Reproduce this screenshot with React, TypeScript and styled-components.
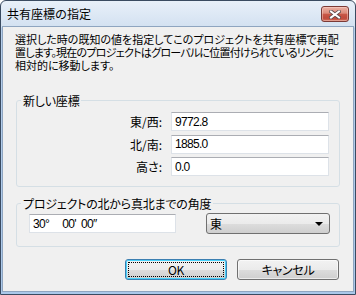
import React from 'react';
import styled, { createGlobalStyle } from 'styled-components';

const GlobalStyle = createGlobalStyle`
  html, body {
    margin: 0;
    padding: 0;
    background: #ffffff;
  }
  body {
    font-family: "Noto Sans CJK JP", "Liberation Sans", sans-serif;
    font-size: 12px;
    color: #000;
  }
`;

const JP = `"Noto Sans CJK JP", "Liberation Sans", sans-serif`;
const NUM = `"Liberation Sans", "Noto Sans CJK JP", sans-serif`;

const Window = styled.div`
  width: 356px;
  height: 295px;
  box-sizing: border-box;
  border: 1px solid #3a4b61;
  border-radius: 6px 6px 0 0;
  background: linear-gradient(#e8f0f9 0px, #d3e1f1 26px, #b6cfec 27px, #aac8ea 100%);
  display: flex;
  flex-direction: column;
  overflow: hidden;
`;

const TitleBar = styled.div`
  height: 25px;
  flex: none;
  display: flex;
  align-items: center;
  justify-content: space-between;
  padding: 0 6px 0 6px;
`;

const Title = styled.div`
  font-family: ${JP};
  font-size: 12px;
  line-height: 14px;
  margin-top: 1px;
  color: #000;
`;

const CloseButton = styled.div`
  width: 28px;
  height: 16px;
  box-sizing: border-box;
  margin-top: 1px;
  border: 1px solid #7b3a36;
  border-radius: 3px;
  background: linear-gradient(#eab0a3 0%, #dc8a7a 45%, #c85848 50%, #c04a3c 80%, #d0705c 100%);
  box-shadow: inset 0 0 0 1px rgba(255, 220, 210, 0.45);
  display: flex;
  align-items: center;
  justify-content: center;
`;

const Body = styled.div`
  flex: 1;
  margin: 0 1px 2px 1px;
  border: 1px solid #8fa5c0;
  background: #f0f0f0;
  padding: 6px 13px 0 13px;
  display: flex;
  flex-direction: column;
`;

const Description = styled.div`
  margin: 0 0 0 -1px;
  font-family: ${JP};
  font-feature-settings: "palt";
  font-size: 11px;
  line-height: 13px;
  white-space: nowrap;
`;

const Line = styled.div<{ $ls: number }>`
  height: 13px;
  letter-spacing: ${(p) => p.$ls}px;
`;

const Group = styled.fieldset<{ $top: number; $pad: string }>`
  margin: ${(p) => p.$top}px 0 0 0;
  padding: ${(p) => p.$pad};
  border: 1px solid #d5dfe5;
  border-radius: 3px;
  min-inline-size: 0;
`;

const Legend = styled.legend`
  margin-left: 4px;
  padding: 0 2px;
  font-family: ${JP};
  font-feature-settings: "palt";
  font-size: 12px;
  line-height: 13px;
  letter-spacing: -0.2px;
`;

const CoordGrid = styled.div`
  display: grid;
  grid-template-columns: 1fr 158px;
  column-gap: 9px;
  row-gap: 3.5px;
  align-items: center;
`;

const FieldLabel = styled.label`
  text-align: right;
  font-family: ${JP};
  font-feature-settings: "palt";
  font-size: 12px;
  line-height: 13px;
`;

const TextBox = styled.div<{ $width?: number }>`
  width: ${(p) => (p.$width ? `${p.$width}px` : 'auto')};
  height: 19px;
  box-sizing: border-box;
  background: #ffffff;
  border: 1px solid #dde2e8;
  border-top-color: #abadb3;
  padding: 0 0 0 3px;
  display: flex;
  align-items: center;
  font-family: ${NUM};
  font-size: 12px;
  letter-spacing: -0.7px;
  white-space: pre;
`;

const AngleRow = styled.div`
  display: flex;
  align-items: center;
  justify-content: space-between;
  padding: 3px 0 0 12px;
`;

const Select = styled.div`
  width: 124px;
  height: 21px;
  box-sizing: border-box;
  border: 1px solid #707070;
  border-radius: 3px;
  background: linear-gradient(#f2f2f2 0%, #ebebeb 50%, #dddddd 51%, #cfcfcf 100%);
  display: flex;
  align-items: center;
  justify-content: space-between;
  padding: 0 6px 0 3px;
  font-family: ${JP};
  font-size: 12px;
`;

const Arrow = styled.span`
  width: 0;
  height: 0;
  border-left: 4px solid transparent;
  border-right: 4px solid transparent;
  border-top: 4px solid #000;
`;

const ButtonRow = styled.div`
  display: flex;
  justify-content: flex-end;
  gap: 10px;
  margin: 12px 1px 0 0;
`;

const Button = styled.div<{ $default?: boolean }>`
  position: relative;
  width: 102px;
  height: 21px;
  box-sizing: border-box;
  border: 1px solid ${(p) => (p.$default ? '#3c7fb1' : '#707070')};
  border-radius: 3px;
  background: linear-gradient(#f2f2f2 0%, #ebebeb 50%, #dddddd 51%, #cfcfcf 100%);
  box-shadow: ${(p) => (p.$default ? 'inset 0 0 0 1px #48d2fb' : 'inset 0 0 0 1px rgba(255,255,255,0.6)')};
  display: flex;
  align-items: center;
  justify-content: center;
  font-family: ${JP};
  font-feature-settings: "palt";
  font-size: 12px;
  letter-spacing: -0.3px;
`;

const FocusRing = styled.span`
  position: absolute;
  inset: 2px;
  border: 1px dotted #000;
  pointer-events: none;
`;

const CloseIcon = () => (
  <svg width="12" height="9" viewBox="0 0 12 9">
    <path d="M2 1.5 L10 7.5 M10 1.5 L2 7.5" stroke="#5b4b4b" strokeWidth="3.6" strokeLinecap="square" />
    <path d="M2 1.5 L10 7.5 M10 1.5 L2 7.5" stroke="#ffffff" strokeWidth="2" strokeLinecap="square" />
  </svg>
);

const coords = [
  { label: '東/西:', value: '9772.8' },
  { label: '北/南:', value: '1885.0' },
  { label: '高さ:', value: '0.0' },
];

const descLines = [
  { text: '選択した時の既知の値を指定してこのプロジェクトを共有座標で再配', ls: 0 },
  { text: '置します。現在のプロジェクトはグローバルに位置付けられているリンクに', ls: -0.75 },
  { text: '相対的に移動します。', ls: 0 },
];

export default function App() {
  return (
    <>
      <GlobalStyle />
      <Window>
        <TitleBar>
          <Title>共有座標の指定</Title>
          <CloseButton>
            <CloseIcon />
          </CloseButton>
        </TitleBar>
        <Body>
          <Description>
            {descLines.map((l) => (
              <Line key={l.text} $ls={l.ls}>
                {l.text}
              </Line>
            ))}
          </Description>

          <Group $top={22} $pad="5px 10px 10px 0">
            <Legend>新しい座標</Legend>
            <CoordGrid>
              {coords.map((c) => (
                <React.Fragment key={c.label}>
                  <FieldLabel>{c.label}</FieldLabel>
                  <TextBox>{c.value}</TextBox>
                </React.Fragment>
              ))}
            </CoordGrid>
          </Group>

          <Group $top={10} $pad="0 9px 12px 0">
            <Legend>プロジェクトの北から真北までの角度</Legend>
            <AngleRow>
              <TextBox $width={147}>{'30°     00\'  00″'}</TextBox>
              <Select>
                <span>東</span>
                <Arrow />
              </Select>
            </AngleRow>
          </Group>

          <ButtonRow>
            <Button $default>
              OK
              <FocusRing />
            </Button>
            <Button>キャンセル</Button>
          </ButtonRow>
        </Body>
      </Window>
    </>
  );
}
